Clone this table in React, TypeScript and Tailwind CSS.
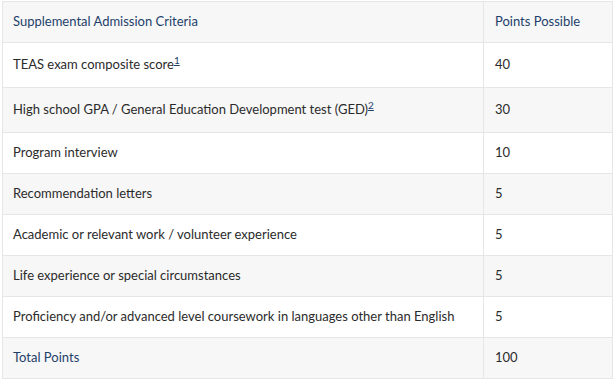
const rows: { label: string; sup?: string; points: string }[] = [
  { label: 'TEAS exam composite score', sup: '1', points: '40' },
  { label: 'High school GPA / General Education Development test (GED)', sup: '2', points: '30' },
  { label: 'Program interview', points: '10' },
  { label: 'Recommendation letters', points: '5' },
  { label: 'Academic or relevant work / volunteer experience', points: '5' },
  { label: 'Life experience or special circumstances', points: '5' },
  { label: 'Proficiency and/or advanced level coursework in languages other than English', points: '5' },
];

export default function App() {
  return (
    <div className="w-[615px] h-[381px] bg-white pt-px pl-[2px] font-['Lato',sans-serif] text-[13px] text-[#2b2b2b]">
      <table className="w-[611px] border-collapse border border-[#e6e6e6]">
        <thead>
          <tr className="h-[41px] bg-[#f7f7f7] text-[#1d3f6b]">
            <th className="border border-[#e6e6e6] px-[10px] text-left font-normal">Supplemental Admission Criteria</th>
            <th className="w-[129px] border border-[#e6e6e6] px-[11px] text-left font-normal">Points Possible</th>
          </tr>
        </thead>
        <tbody>
          {rows.map((r, i) => (
            <tr key={i} className={`${r.sup ? 'h-[45px]' : 'h-[41px]'} ${i % 2 === 1 ? 'bg-[#f7f7f7]' : 'bg-white'}`}>
              <td className="border border-[#e6e6e6] px-[10px]">
                {r.label}
                {r.sup && (
                  <sup className="text-[10px] underline text-[#1d3f6b]">{r.sup}</sup>
                )}
              </td>
              <td className="border border-[#e6e6e6] px-[11px]">{r.points}</td>
            </tr>
          ))}
          <tr className="h-[41px] bg-[#f7f7f7] text-[#1d3f6b]">
            <td className="border border-[#e6e6e6] px-[10px]">Total Points</td>
            <td className="border border-[#e6e6e6] px-[11px] text-[#2b2b2b]">100</td>
          </tr>
        </tbody>
      </table>
    </div>
  );
}
